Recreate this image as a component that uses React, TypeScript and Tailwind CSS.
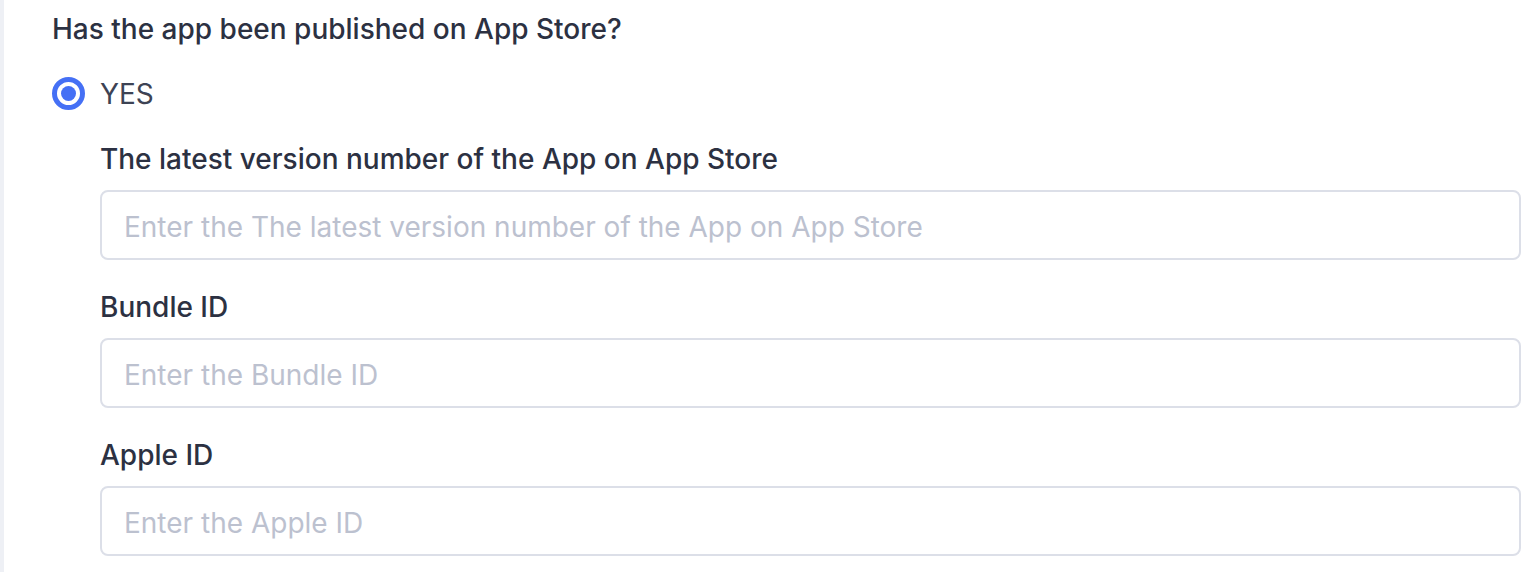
import React from "react";

const FIELDS = [
  { label: "The latest version number of the App on App Store", placeholder: "Enter the The latest version number of the App on App Store" },
  { label: "Bundle ID", placeholder: "Enter the Bundle ID" },
  { label: "Apple ID", placeholder: "Enter the Apple ID" },
];

const font = { fontFamily: "Inter, 'Liberation Sans', sans-serif" };

export default function App() {
  return (
    <div className="flex min-h-screen bg-white" style={font}>
      <div className="w-[4px] shrink-0 bg-[#eef0f5]" />
      <div className="flex-1 pl-[48px] pr-[19px] pt-[11px]">
        <div className="text-[28px] leading-[36px] font-medium text-[#2c3142]">
          Has the app been published on App Store?
        </div>

        <label className="mt-[30px] flex items-center gap-[15px] h-[33px]">
          <span className="flex h-[33px] w-[33px] items-center justify-center rounded-full border-[5px] border-[#4570f5]">
            <span className="h-[15px] w-[15px] rounded-full bg-[#4570f5]" />
          </span>
          <span className="text-[28px] text-[#3d4354]">YES</span>
        </label>

        <div className="pl-[48px] pt-[31px]">
          {FIELDS.map((f, i) => (
            <div key={f.label} className={i > 0 ? "mt-[29px]" : ""}>
              <div className="text-[28px] leading-[36px] font-medium text-[#2c3142]">{f.label}</div>
              <input
                className="mt-[13px] block h-[70px] w-full rounded-[8px] border-2 border-[#dcdfe8] px-[22px] pt-[3px] text-[28px] text-[#2c3142] outline-none placeholder:text-[#bcc1cf]"
                placeholder={f.placeholder}
                style={font}
              />
            </div>
          ))}
        </div>
      </div>
    </div>
  );
}
